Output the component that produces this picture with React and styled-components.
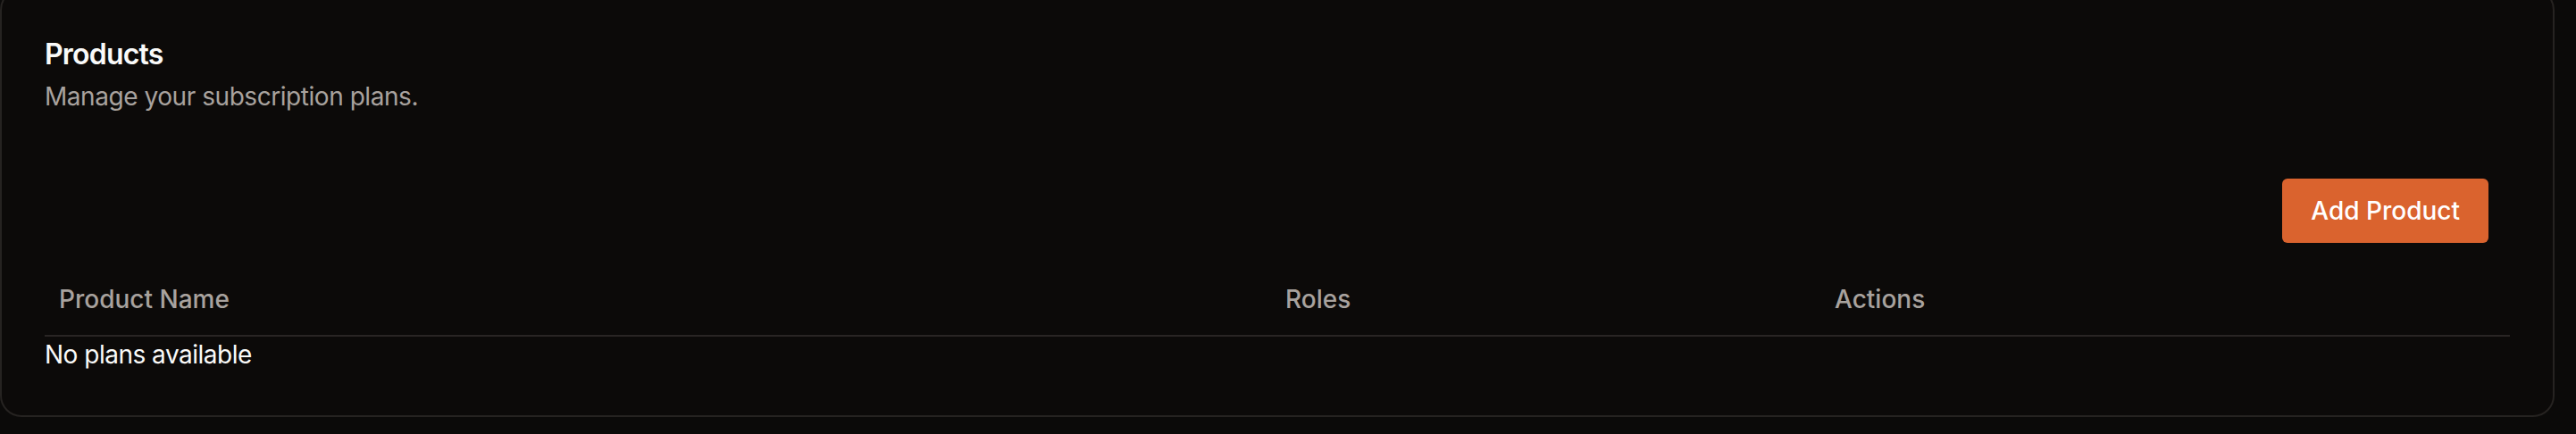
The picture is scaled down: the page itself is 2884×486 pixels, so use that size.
import React from "react";
import styled, { createGlobalStyle } from "styled-components";

const GlobalStyle = createGlobalStyle`
  html, body {
    margin: 0;
    padding: 0;
    background: #0b0a09;
    font-family: Inter, "Noto Sans", "Liberation Sans", sans-serif;
    -webkit-font-smoothing: antialiased;
  }
  #root { width: 2884px; }
`;

const Page = styled.div`
  width: 2884px;
  height: 486px;
  overflow: hidden;
  background: #0b0a09;
`;

const Card = styled.section`
  box-sizing: border-box;
  width: 2860px;
  margin-top: -13px;
  padding: 48px;
  border: 2px solid #262321;
  border-radius: 24px;
  background: #0c0a09;
  display: flex;
  flex-direction: column;
`;

const Header = styled.header`
  display: flex;
  flex-direction: column;
  gap: 3px;
`;

const Title = styled.h2`
  margin: 0;
  font-size: 32px;
  line-height: 48px;
  font-weight: 600;
  color: #fafaf9;
  letter-spacing: -0.8px;
`;

const Subtitle = styled.p`
  margin: 0;
  font-size: 28px;
  line-height: 40px;
  font-weight: 400;
  color: #a8a29e;
  letter-spacing: -0.45px;
`;

const Toolbar = styled.div`
  display: flex;
  justify-content: flex-end;
  padding: 0 24px 0 0;
  margin-top: 72px;
  margin-bottom: 23px;
`;

const PrimaryButton = styled.button`
  height: 72px;
  padding: 0 32px;
  border: none;
  border-radius: 6px;
  background: #da632e;
  color: #ffffff;
  font-family: inherit;
  font-size: 28px;
  font-weight: 500;
  cursor: pointer;
`;

const Table = styled.div`
  display: grid;
  grid-template-columns: 1373px 615px 1fr;
`;

const HeadCell = styled.div`
  height: 80px;
  display: flex;
  align-items: center;
  padding: 0 16px;
  font-size: 28px;
  font-weight: 500;
  color: #a8a29e;
  border-bottom: 2px solid #292524;
`;

const EmptyRow = styled.div`
  grid-column: 1 / -1;
  font-size: 28px;
  line-height: 40px;
  color: #fafaf9;
  letter-spacing: -0.5px;
`;

export default function App() {
  const columns = ["Product Name", "Roles", "Actions"];
  return (
    <Page>
      <GlobalStyle />
      <Card>
        <Header>
          <Title>Products</Title>
          <Subtitle>Manage your subscription plans.</Subtitle>
        </Header>
        <Toolbar>
          <PrimaryButton>Add Product</PrimaryButton>
        </Toolbar>
        <Table>
          {columns.map((c) => (
            <HeadCell key={c}>{c}</HeadCell>
          ))}
          <EmptyRow>No plans available</EmptyRow>
        </Table>
      </Card>
    </Page>
  );
}
